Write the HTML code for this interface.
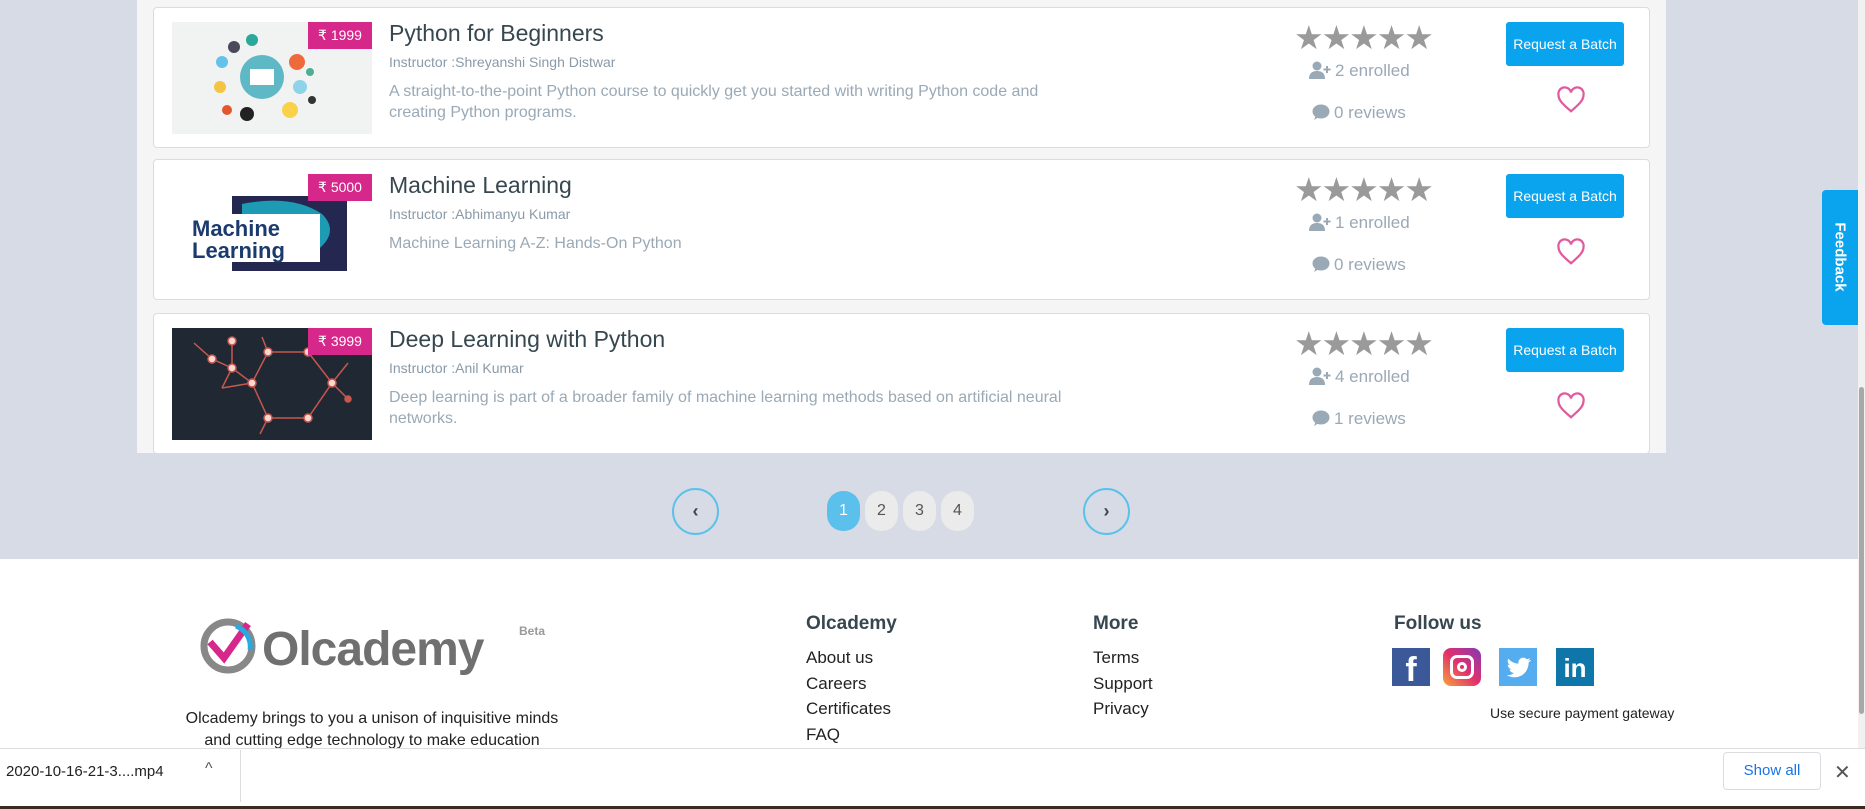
<!DOCTYPE html>
<html><head><meta charset="utf-8"><style>
*{margin:0;padding:0;box-sizing:border-box}
body{width:1865px;height:809px;overflow:hidden;background:#d7dbe5;font-family:"Liberation Sans",Arial,sans-serif;position:relative}
.abs{position:absolute}
.panel{left:137px;top:0;width:1529px;height:453px;background:#f5f5f5}
.card{position:absolute;left:153px;width:1497px;height:141px;background:#fff;border:1px solid #dcdcdc;border-radius:4px}
.img{position:absolute;left:18px;top:14px;width:200px;height:112px;overflow:hidden}
.badge{position:absolute;right:0;top:0;width:64px;height:27px;background:#d6278a;color:#fff;font-size:14px;line-height:27px;text-align:center}
.title{position:absolute;left:235px;top:12px;font-size:23px;color:#37474f}
.instr{position:absolute;left:235px;top:46px;font-size:14px;color:#8a9aa8}
.desc{position:absolute;left:235px;top:73px;font-size:16px;line-height:21px;color:#9aa9b6;width:690px}
.stars{position:absolute;left:1140px;top:10px;font-size:33px;color:#9a9a9a;letter-spacing:-2px}
.enr{position:absolute;left:1155px;top:53px;font-size:17px;color:#9aa9b6}
.rev{position:absolute;left:1158px;top:95px;font-size:17px;color:#9aa9b6}
.enr svg,.rev svg{vertical-align:-3px;margin-right:4px}
.btn{position:absolute;left:1352px;top:14px;width:118px;height:44px;background:#09a3ee;border-radius:3px;color:#fff;font-size:14px;line-height:44px;text-align:center}
.heart{position:absolute;left:1402px;top:78px}
.pg{position:absolute;top:491px;width:33px;height:40px;border-radius:16px;background:#ebebeb;color:#555;font-size:16px;line-height:40px;text-align:center}
.circ{position:absolute;top:488px;width:47px;height:47px;border:2px solid #5bc0eb;border-radius:50%;text-align:center;line-height:42px;color:#444;font-size:18px;font-weight:bold}
.footer{left:0;top:559px;width:1858px;height:250px;background:#fff}
.fh{position:absolute;font-size:19px;font-weight:bold;color:#37474f}
.fl{position:absolute;font-size:17px;color:#222;line-height:25.5px}
.ic{position:absolute;top:648px;width:38px;height:38px}
</style></head><body>
<div class="abs panel"></div>

<div class="card" style="top:7px">
 <div class="img" style="background:#f1f3f2">
  <svg width="200" height="112"><circle cx="90" cy="55" r="22" fill="#5fb8c6"/><rect x="78" y="47" width="24" height="16" fill="#fff"/>
  <circle cx="62" cy="25" r="6" fill="#4a4a5a"/><circle cx="80" cy="18" r="6" fill="#2aa89a"/><circle cx="50" cy="40" r="6" fill="#64c2e8"/><circle cx="125" cy="40" r="8" fill="#ef6a3a"/><circle cx="48" cy="65" r="6" fill="#f4c542"/><circle cx="128" cy="65" r="7" fill="#8fd3e8"/><circle cx="118" cy="88" r="8" fill="#f9d24a"/><circle cx="75" cy="92" r="7" fill="#222"/><circle cx="55" cy="88" r="5" fill="#e4572e"/><circle cx="140" cy="78" r="4" fill="#333"/><circle cx="138" cy="50" r="4" fill="#4caf93"/></svg>
  <div class="badge">₹ 1999</div></div>
 <div class="title">Python for Beginners</div>
 <div class="instr">Instructor :Shreyanshi Singh Distwar</div>
 <div class="desc">A straight-to-the-point Python course to quickly get you started with writing Python code and creating Python programs.</div>
 <div class="stars">★★★★★</div>
 <div class="enr"><svg width="22" height="18" viewBox="0 0 22 18"><circle cx="8" cy="5" r="4.5" fill="#9aa9b6"/><path d="M0 18 Q0 10 8 10 Q16 10 16 18Z" fill="#9aa9b6"/><path d="M18 5v7M14.5 8.5h7" stroke="#9aa9b6" stroke-width="2"/></svg>2 enrolled</div>
 <div class="rev"><svg width="18" height="17" viewBox="0 0 18 17"><ellipse cx="9" cy="7.5" rx="8.5" ry="7" fill="#9aa9b6"/><path d="M2 16 L4 11 L7 13Z" fill="#9aa9b6"/></svg>0 reviews</div>
 <div class="btn">Request a Batch</div>
 <svg class="heart" width="30" height="28" viewBox="0 0 24 22"><path d="M12 20 C5 14 2 11 2 7 A5 5 0 0 1 12 5 A5 5 0 0 1 22 7 C22 11 19 14 12 20Z" fill="none" stroke="#e05a9e" stroke-width="1.8"/></svg>
</div>

<div class="card" style="top:159px">
 <div class="img" style="background:#fff">
  <svg width="200" height="112"><rect x="60" y="22" width="115" height="75" fill="#242850"/><path d="M70 30 Q120 20 150 40 Q170 60 140 80 Q100 90 70 75Z" fill="#1d9bb5"/><rect x="18" y="40" width="130" height="48" fill="#fff"/><text x="20" y="62" font-family="Liberation Sans" font-weight="bold" font-size="22" fill="#1b3b6f">Machine</text><text x="20" y="84" font-family="Liberation Sans" font-weight="bold" font-size="22" fill="#1b3b6f">Learning</text></svg>
  <div class="badge">₹ 5000</div></div>
 <div class="title">Machine Learning</div>
 <div class="instr">Instructor :Abhimanyu Kumar</div>
 <div class="desc">Machine Learning A-Z: Hands-On Python</div>
 <div class="stars">★★★★★</div>
 <div class="enr"><svg width="22" height="18" viewBox="0 0 22 18"><circle cx="8" cy="5" r="4.5" fill="#9aa9b6"/><path d="M0 18 Q0 10 8 10 Q16 10 16 18Z" fill="#9aa9b6"/><path d="M18 5v7M14.5 8.5h7" stroke="#9aa9b6" stroke-width="2"/></svg>1 enrolled</div>
 <div class="rev"><svg width="18" height="17" viewBox="0 0 18 17"><ellipse cx="9" cy="7.5" rx="8.5" ry="7" fill="#9aa9b6"/><path d="M2 16 L4 11 L7 13Z" fill="#9aa9b6"/></svg>0 reviews</div>
 <div class="btn">Request a Batch</div>
 <svg class="heart" width="30" height="28" viewBox="0 0 24 22"><path d="M12 20 C5 14 2 11 2 7 A5 5 0 0 1 12 5 A5 5 0 0 1 22 7 C22 11 19 14 12 20Z" fill="none" stroke="#e05a9e" stroke-width="1.8"/></svg>
</div>

<div class="card" style="top:313px">
 <div class="img" style="background:#1f2833">
  <svg width="200" height="112" stroke="#c9574e" stroke-width="1.5" fill="#f8d8d0"><path d="M22 15 L40 31 L60 40 L80 55 L96 90 L136 90 L160 55 L136 24 L96 24 L80 55 M60 40 L60 13 M160 55 L176 71 M160 55 L176 35 M96 24 L90 9 M96 90 L88 106 M50 60 L80 55 M50 60 L60 40" fill="none"/><circle cx="40" cy="31" r="4"/><circle cx="60" cy="13" r="4"/><circle cx="60" cy="40" r="4"/><circle cx="80" cy="55" r="4"/><circle cx="96" cy="24" r="4"/><circle cx="136" cy="24" r="4"/><circle cx="160" cy="55" r="4"/><circle cx="136" cy="90" r="4"/><circle cx="96" cy="90" r="4"/><circle cx="176" cy="71" r="3" fill="#c9574e"/></svg>
  <div class="badge">₹ 3999</div></div>
 <div class="title">Deep Learning with Python</div>
 <div class="instr">Instructor :Anil Kumar</div>
 <div class="desc">Deep learning is part of a broader family of machine learning methods based on artificial neural networks.</div>
 <div class="stars">★★★★★</div>
 <div class="enr"><svg width="22" height="18" viewBox="0 0 22 18"><circle cx="8" cy="5" r="4.5" fill="#9aa9b6"/><path d="M0 18 Q0 10 8 10 Q16 10 16 18Z" fill="#9aa9b6"/><path d="M18 5v7M14.5 8.5h7" stroke="#9aa9b6" stroke-width="2"/></svg>4 enrolled</div>
 <div class="rev"><svg width="18" height="17" viewBox="0 0 18 17"><ellipse cx="9" cy="7.5" rx="8.5" ry="7" fill="#9aa9b6"/><path d="M2 16 L4 11 L7 13Z" fill="#9aa9b6"/></svg>1 reviews</div>
 <div class="btn">Request a Batch</div>
 <svg class="heart" width="30" height="28" viewBox="0 0 24 22"><path d="M12 20 C5 14 2 11 2 7 A5 5 0 0 1 12 5 A5 5 0 0 1 22 7 C22 11 19 14 12 20Z" fill="none" stroke="#e05a9e" stroke-width="1.8"/></svg>
</div>

<div class="circ" style="left:672px">‹</div>
<div class="pg" style="left:827px;background:#5bc0eb;color:#fff">1</div>
<div class="pg" style="left:865px">2</div>
<div class="pg" style="left:903px">3</div>
<div class="pg" style="left:941px">4</div>
<div class="circ" style="left:1083px">›</div>

<div class="abs" style="left:1822px;top:190px;width:36px;height:135px;background:#09a3ee;border-radius:4px 0 0 4px"><div style="position:absolute;left:18px;top:67px;transform:translate(-50%,-50%) rotate(90deg);color:#fff;font-weight:bold;font-size:15px;white-space:nowrap">Feedback</div></div>
<div class="abs" style="left:1858px;top:0;width:7px;height:748px;background:#f1f1f1"></div>
<div class="abs" style="left:1859px;top:387px;width:5px;height:327px;background:#a8a8a8;border-radius:3px"></div>

<div class="abs footer"></div>
<svg class="abs" style="left:196px;top:610px" width="64" height="66"><circle cx="32" cy="36" r="24" fill="none" stroke="#888" stroke-width="7"/><path d="M14 32 L28 48 L52 14" fill="none" stroke="#d6278a" stroke-width="7"/><path d="M40 16 A22 22 0 0 1 54 40" fill="none" stroke="#2aa9e0" stroke-width="5"/></svg>
<div class="abs" style="left:262px;top:622px;font-size:48px;font-weight:bold;color:#707070;letter-spacing:-1px">Olcademy</div>
<div class="abs" style="left:519px;top:624px;font-size:12px;font-weight:bold;color:#999">Beta</div>
<div class="abs" style="left:172px;top:708px;width:400px;text-align:center;font-size:16px;line-height:22px;color:#222">Olcademy brings to you a unison of inquisitive minds and cutting edge technology to make education</div>

<div class="fh" style="left:806px;top:613px">Olcademy</div>
<div class="fl" style="left:806px;top:645px">About us<br>Careers<br>Certificates<br>FAQ</div>
<div class="fh" style="left:1093px;top:613px">More</div>
<div class="fl" style="left:1093px;top:645px">Terms<br>Support<br>Privacy</div>
<div class="fh" style="left:1394px;top:613px">Follow us</div>
<div class="ic" style="left:1392px;background:#3b5998;color:#fff;font-size:34px;font-weight:bold;text-align:center;line-height:44px">f</div>
<div class="ic" style="left:1443px;background:linear-gradient(45deg,#f9a23a,#e1306c,#833ab4);border-radius:8px"><div style="position:absolute;left:7px;top:7px;width:24px;height:24px;border:3px solid #fff;border-radius:7px"></div><div style="position:absolute;left:14px;top:14px;width:10px;height:10px;border:3px solid #fff;border-radius:50%"></div></div>
<div class="ic" style="left:1499px;background:#55acee"><svg width="38" height="38" viewBox="0 0 24 24"><path d="M20 7.5c-.6.3-1.2.4-1.8.5.7-.4 1.1-1 1.4-1.7-.6.4-1.3.6-2 .8a3.1 3.1 0 0 0-5.3 2.8C9.7 9.8 7.4 8.6 5.9 6.7c-.8 1.4-.4 3.2 1 4.1-.5 0-1-.2-1.400-.4 0 1.5 1.1 2.8 2.5 3.1-.5.1-.9.2-1.4.1.4 1.3 1.6 2.1 2.9 2.2A6.3 6.3 0 0 1 5 17.1c1.4.9 3.1 1.4 4.8 1.4 5.8 0 9-4.9 8.9-9.3.6-.4 1.1-1 1.5-1.6z" fill="#fff"/></svg></div>
<div class="ic" style="left:1556px;background:#0e76a8;color:#fff;font-size:26px;font-weight:bold;text-align:center;line-height:40px">in</div>
<div class="abs" style="left:1490px;top:705px;font-size:14px;color:#222">Use secure payment gateway</div>

<div class="abs" style="left:0;top:748px;width:1865px;height:61px;background:#fff;border-top:1px solid #ddd"></div>
<div class="abs" style="left:6px;top:763px;font-size:15px;color:#222">2020-10-16-21-3....mp4</div>
<div class="abs" style="left:205px;top:760px;font-size:16px;color:#555">^</div>
<div class="abs" style="left:240px;top:750px;width:1px;height:52px;background:#ddd"></div>
<div class="abs" style="left:1723px;top:752px;width:98px;height:38px;border:1px solid #dadce0;border-radius:4px;color:#1a73e8;font-size:15px;text-align:center;line-height:36px">Show all</div>
<div class="abs" style="left:1834px;top:760px;font-size:20px;color:#555">✕</div>
<div class="abs" style="left:0;top:806px;width:1865px;height:3px;background:#3a2a22"></div>
</body></html>
